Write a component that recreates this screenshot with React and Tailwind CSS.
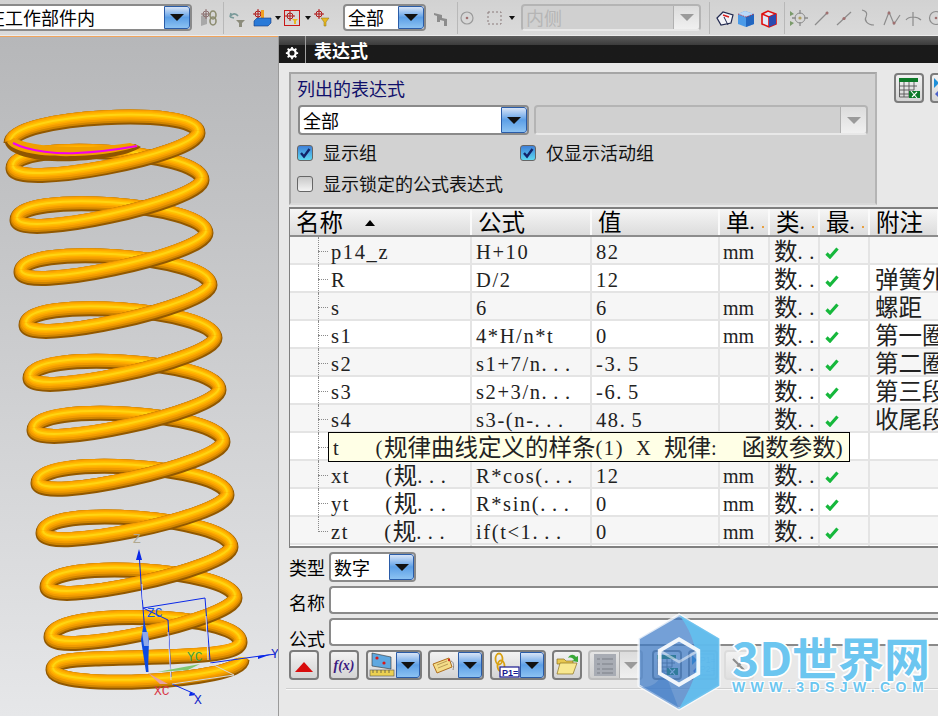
import React from 'react';

const CJK = "[font-family:'Noto_Sans_CJK_SC',sans-serif]";
const LATIN = "[font-family:'Liberation_Serif',serif] text-[20.5px] whitespace-pre";

// splits text so latin is spaced out to half width and chinese gets the full width font
const Mixed = ({ text }) =>
  text.split(/([\u3000-\u9fff\uff00-\uffef]+|\.+| +)/).filter(Boolean).map((part, i) => {
    if (/[\u3000-\u9fff\uff00-\uffef]/.test(part)) {
      return <span key={i} className="[font-family:'Noto_Sans_CJK_SC',sans-serif] text-[23.5px] leading-none align-[-1px]">{part}</span>;
    }
    if (/^[. ]+$/.test(part)) {
      return <span key={i} className={`${LATIN} tracking-[6.6px]`}>{part}</span>;
    }
    return <span key={i} className={`${LATIN} tracking-[1.6px]`}>{part}</span>;
  });

// spring centre line, read off the picture
const L = [[11, 143], [13, 168], [17, 220], [21, 272], [26, 325], [30, 378], [34, 430], [38, 483], [43, 533], [47, 587], [51, 637], [53, 670]];
const R = [[198, 133], [202, 180], [206, 233], [210, 285], [215, 338], [219, 390], [223, 442], [227, 495], [231, 547], [235, 598], [240, 642], [242, 660]];

const back = (i, h = 29) => `M${L[i][0]} ${L[i][1]}C${L[i][0]} ${L[i][1] - h} ${R[i][0]} ${R[i][1] - h} ${R[i][0]} ${R[i][1]}`;
const front = (i, h = 22) => `M${R[i][0]} ${R[i][1]}C${R[i][0]} ${R[i][1] + h} ${L[i + 1][0]} ${L[i + 1][1] + h} ${L[i + 1][0]} ${L[i + 1][1]}`;

const Tube = ({ d }) => (
  <g fill="none">
    <path d={d} stroke="#915800" strokeWidth="15" />
    <path d={d} stroke="#cf8400" strokeWidth="13" transform="translate(0 -1)" />
    <path d={d} stroke="#f09a00" strokeWidth="11" transform="translate(0 -2)" />
    <path d={d} stroke="#ffaa00" strokeWidth="8" transform="translate(0 -2.5)" />
    <path d={d} stroke="#ffbe00" strokeWidth="5" transform="translate(0 -2.5)" />
    <path d={d} stroke="#ffd412" strokeWidth="2" transform="translate(0 -2.5)" />
  </g>
);

const Spring = () => {
  const backs = [];
  for (let i = 1; i <= 10; i++) backs.push(back(i));
  const fronts = [];
  for (let i = 1; i <= 9; i++) fronts.push(front(i));
  return (
    <svg viewBox="0 37 278 679" className="block w-[278px] h-[679px]">
      {backs.map((d, i) => <Tube key={i} d={d} />)}
      <Tube d={back(0, 27)} />
      <path d="M5 143C8 156 40 163 75 161C105 159 130 155 141 147L135 144C100 150 40 152 13 140Z" fill="#8f5500" />
      <path d="M7 142C12 152 40 157 75 156C105 155 125 151 139 146L130 143C100 148 40 150 14 138Z" fill="#f0a000" />
      <path d="M13 143C30 152 60 154 77 153C100 152 120 149 137 146" fill="none" stroke="#f000f0" strokeWidth="2" />
      <Tube d={front(0, 23)} />
      {fronts.map((d, i) => <Tube key={i} d={d} />)}
      <Tube d="M240 642C240 660 150 656 95 659C68 660 53 662 53 670" />
      <Tube d={`M${L[11][0]} ${L[11][1]}C${L[11][0]} ${L[11][1] + 22} ${R[11][0]} ${R[11][1] + 22} ${R[11][0]} ${R[11][1]}`} />

      {/* triad */}
      <g fill="none" strokeWidth="1">
        <path d="M139 552L142 597L143 608L148 672" stroke="#0a28e8" />
        <path d="M143 608L205 598L210 660" stroke="#0a28e8" />
        <path d="M143 608L168 620L171 677" stroke="#0a28e8" />
        <path d="M210 663L253 657L276 654" stroke="#0a28e8" />
        <path d="M172 684L195 694" stroke="#0a28e8" />
        <path d="M210 663L234 675L172 684" stroke="#d8d8d8" />
        <path d="M206 616L208 660M168 632L171 680M142 584L143 600" stroke="#dde" />
      </g>
      <path d="M139 549L136 560L142 560Z" fill="#0a28e8" />
      <path d="M258 656L272 654L258 659Z" fill="#0a28e8" />
      <path d="M190 692L196 695L189 696Z" fill="#0a28e8" />
      <path d="M144 621L141 640L146 672L148 672L149 640Z" fill="#0c4ae0" />
      <path d="M142 632L148 632L149 646L144 646Z" fill="#8ea8e8" />
      <path d="M157 672L200 664L188 670Z" fill="#7fc86f" />
      <path d="M148 673L168 684L160 684Z" fill="#e8a0a0" />
      <g fontFamily="'Liberation Mono',monospace" fontSize="13">
        <text x="133" y="543" fill="#b0a890">Z</text>
        <text x="147" y="617" fill="#1a55e8">ZC</text>
        <text x="187" y="661" fill="#3aa04a">YC</text>
        <text x="154" y="695" fill="#d83848">XC</text>
        <text x="194" y="704" fill="#1428c8">X</text>
        <text x="271" y="658" fill="#1428c8">Y</text>
      </g>
    </svg>
  );
};

const ArrowBtn = ({ disabled, className = '' }) => (
  <div
    className={`flex items-center justify-center shrink-0 ${
      disabled
        ? 'bg-gradient-to-b from-[#dcdcdc] to-[#f0f0f0] border-l border-[#b0b0b0]'
        : 'bg-gradient-to-b from-[#d8e4f6] via-[#5c9fe6] to-[#8cc2f2] border border-[#2a5ca8] rounded-r-[3px]'
    } ${className}`}
  >
    <div className={`w-0 h-0 border-l-[7px] border-r-[7px] border-t-[7px] border-l-transparent border-r-transparent ${disabled ? 'border-t-[#9a9a9a]' : 'border-t-[#111]'}`} />
  </div>
);

const Combo = ({ text, className = '', disabled, arrow = 'w-[26px]' }) => (
  <div
    className={`flex h-full shrink-0 overflow-hidden rounded-[4px] border-2 ${
      disabled ? 'border-[#b4b4b4] bg-[#d0d0d0] border-b-[#e8e8e8]' : 'border-[#8a8a8a] bg-white'
    } ${className}`}
  >
    <div className={`flex-1 min-w-0 flex items-center pl-[3px] text-[18px] ${disabled ? 'text-[#b5b5b5]' : 'text-black'}`}>{text}</div>
    <ArrowBtn disabled={disabled} className={arrow} />
  </div>
);

const Check = ({ checked }) => (
  <div
    className={`w-[16px] h-[16px] shrink-0 rounded-[3px] border border-[#666] flex items-center justify-center ${
      checked ? 'bg-gradient-to-b from-[#3f7fd8] to-[#5fd8f0]' : 'bg-gradient-to-b from-[#c8c8c8] to-[#f4f4f4]'
    }`}
  >
    {checked && (
      <svg viewBox="0 0 12 12" className="w-[12px] h-[12px]">
        <path d="M2 6L5 9.5L10.5 2" fill="none" stroke="#12246a" strokeWidth="2.4" />
      </svg>
    )}
  </div>
);

const GreenCheck = () => (
  <svg viewBox="0 0 14 12" className="w-[14px] h-[12px] block">
    <path d="M1.5 6.5L5 10L12.5 1.5" fill="none" stroke="#16b83c" strokeWidth="3.2" />
  </svg>
);

const Caret = ({ className = '' }) => (
  <div className={`w-0 h-0 shrink-0 border-l-[3.5px] border-r-[3.5px] border-t-[4px] border-l-transparent border-r-transparent border-t-[#111] ${className}`} />
);

const Divider = ({ className = '' }) => <div className={`w-px h-[32px] shrink-0 bg-[#f2f2f2] border-l border-[#b8b8b8] ${className}`} />;

const Ico = ({ children, className = '' }) => (
  <svg viewBox="0 0 20 20" className={`w-[20px] h-[20px] shrink-0 ${className}`}>{children}</svg>
);

const Target = ({ x = 7, y = 7, c = '#b01818' }) => (
  <g fill="none" stroke={c} strokeWidth="1">
    <circle cx={x} cy={y} r="3" />
    <path d={`M${x - 5} ${y}H${x + 5}M${x} ${y - 5}V${y + 5}`} />
  </g>
);

const Funnel = ({ x = 11, y = 11, c = '#e8b820' }) => <path d={`M${x} ${y}h8l-3 4v4h-2v-4z`} fill={c} stroke="#8a7010" strokeWidth=".5" />;

const GreyLine = ({ d }) => <path d={d} fill="none" stroke="#8c8c8c" strokeWidth="1.2" />;

const TableIcon = () => (
  <svg viewBox="0 0 24 24" className="w-[24px] h-[24px]">
    <rect x="2" y="2" width="19" height="4" fill="#0d7a28" />
    <path d="M2.5 6v15h15M7 6v15M12 6v15M17 6v8M2 10h18M2 14h15M2 18h10" fill="none" stroke="#555" strokeWidth=".9" />
    <path d="M12 15h11v7H12z" fill="#0d7a28" />
    <path d="M14 15l6 7M20 16l-5 5" stroke="#fff" strokeWidth="1.1" />
  </svg>
);

const P1Icon = () => (
  <svg viewBox="0 0 24 24" className="w-[24px] h-[24px]">
    <path d="M1 2l5 5-5 5z" fill="#1e8fd8" />
    <path d="M7 13l-5 5 5 5z" fill="#4a60c8" />
    <rect x="8" y="1" width="15" height="21" fill="#e8eef8" stroke="#2a3aa0" />
    <text x="9" y="10" fontSize="8.5" fontFamily="'Liberation Sans',sans-serif" fill="#1a2a90">P1=</text>
    <text x="9" y="19" fontSize="8.5" fontFamily="'Liberation Sans',sans-serif" fill="#1a2a90">P2=</text>
  </svg>
);

const Btn = ({ children, className = '' }) => (
  <div className={`h-[30px] w-[30px] shrink-0 flex items-center justify-center rounded-[4px] border-2 border-[#7c7c7c] bg-gradient-to-b from-[#f2f2f2] to-[#d4d4d4] ${className}`}>
    {children}
  </div>
);

const SplitBtn = ({ children, className = '' }) => (
  <div className={`h-[30px] w-[56px] shrink-0 flex overflow-hidden rounded-[4px] border-2 border-[#7c7c7c] bg-gradient-to-b from-[#f2f2f2] to-[#d4d4d4] ${className}`}>
    <div className="flex-1 flex items-center justify-center">{children}</div>
    <ArrowBtn className="w-[24px]" />
  </div>
);

const rows = [
  ['p14_z', 'H+10', '82', 'mm', ''],
  ['R', 'D/2', '12', '', '弹簧外'],
  ['s', '6', '6', 'mm', '螺距'],
  ['s1', '4*H/n*t', '0', 'mm', '第一圈'],
  ['s2', 's1+7/n...', '-3.5', '', '第二圈'],
  ['s3', 's2+3/n...', '-6.5', '', '第三段'],
  ['s4', 's3-(n-...', '48.5', '', '收尾段'],
  ['', '', '', '', ''],
  ['xt   (规...', 'R*cos(...', '12', 'mm', ''],
  ['yt   (规...', 'R*sin(...', '0', 'mm', ''],
  ['zt   (规...', 'if(t<1...', '0', 'mm', ''],
];

const headers = ['名称', '公式', '值', '单.', '类.', '最.', '附注'];

const GRID = 'grid grid-cols-[182px_120px_128px_50px_50px_50px_69px]';

const App = () => {
  return (
    <div className={`w-[938px] h-[716px] overflow-hidden relative flex flex-col bg-[#e8e8e8] ${CJK}`}>
      {/* top toolbar */}
      <div className="h-[36px] shrink-0 flex items-center bg-gradient-to-b from-[#d2d2d2] to-[#dadada] border-b border-[#ececec] overflow-hidden">
        <div className="h-[27px] w-[192px] shrink-0 flex overflow-hidden rounded-r-[4px] border-2 border-l-0 border-[#8a8a8a] bg-white">
          <div className="flex-1 min-w-0 overflow-hidden flex items-center text-[18px] whitespace-nowrap text-black">
            <span className="-ml-[13px]">在工作部件内</span>
          </div>
          <ArrowBtn className="w-[26px]" />
        </div>
        <Ico className="ml-[6px]">
          <path d="M3 8l6-3v11l-6 2z" fill="#a8a8a8" />
          <Target x={8} y={6} c="#8c7070" />
          <ellipse cx="15" cy="7" rx="3" ry="4" fill="none" stroke="#8c8c70" strokeWidth="1.6" />
          <ellipse cx="15" cy="13" rx="3" ry="4" fill="none" stroke="#8c8c70" strokeWidth="1.6" />
        </Ico>
        <Divider className="ml-[5px]" />
        <Ico className="ml-[3px]">
          <path d="M3 9C5 5 9 5 11 8M3 9l4 1M3 9l1-4" fill="none" stroke="#7a9a9a" strokeWidth="1.6" />
          <path d="M9 12h9l-3 3v4h-3v-4z" fill="#8c8c7c" />
        </Ico>
        <Ico className="ml-[5px]">
          <Target x={6} y={6} />
          <rect x="9" y="2" width="3" height="8" fill="#f0a020" />
          <path d="M2 13l3-3h14v5l-3 3H2z" fill="#2a7ad8" stroke="#143a80" strokeWidth=".6" />
        </Ico>
        <Caret className="ml-[3px]" />
        <div className="ml-[3px] w-[16px] h-[16px] shrink-0 border border-[#c81818] flex items-center justify-center">
          <svg viewBox="0 0 14 14" className="w-[14px] h-[14px]">
            <Target x={5} y={5} />
            <path d="M7 8h6l-2 2v3h-2v-3z" fill="#e8b820" />
          </svg>
        </div>
        <Caret className="ml-[5px]" />
        <Ico className="ml-[1px]">
          <Target x={7} y={6} />
          <Funnel x={9} y={10} />
        </Ico>
        <Combo text="全部" className="!h-[27px] w-[83px] ml-[11px]" />
        <Ico className="ml-[5px]">
          <path d="M3 5l8 2v3l5 1v7h-3v-5l-4-1v2H6V8L3 7z" fill="#8c8c8c" />
        </Ico>
        <Divider className="ml-[6px]" />
        <Ico className="ml-[0px]">
          <circle cx="9" cy="10" r="6" fill="none" stroke="#9a9a9a" strokeWidth="1.2" />
          <circle cx="9" cy="10" r="1.3" fill="#a07070" />
        </Ico>
        <Ico className="ml-[7px]">
          <rect x="3" y="4" width="13" height="12" fill="none" stroke="#8a7a7a" strokeWidth="1" strokeDasharray="2 2" />
        </Ico>
        <Caret className="ml-[4px]" />
        <Combo text="内侧" disabled className="!h-[27px] w-[180px] ml-[6px]" />
        <Divider className="ml-[8px]" />
        <Ico className="ml-[5px]">
          <path d="M2 10l6-6 10 3-2 8-10 2z" fill="#f4f4f8" stroke="#222a50" strokeWidth="1.2" />
          <path d="M8 7l6 2" stroke="#d82020" strokeWidth="1.4" />
          <path d="M9 9l4 8" stroke="#222a50" />
        </Ico>
        <Ico className="ml-[1px]">
          <path d="M2 6l7-3 9 3v10l-8 3-8-3z" fill="#4a9ae8" />
          <path d="M2 6l8 3 8-3-9-3z" fill="#b8d8f8" />
          <path d="M10 9v10l8-3V6z" fill="#2266c0" />
          <path d="M2 6l8 3 8-3" fill="none" stroke="#e02020" strokeWidth=".7" strokeDasharray="1.5 1" />
        </Ico>
        <Ico className="ml-[3px]">
          <path d="M3 6l6-3 8 3v10l-7 3-7-3z" fill="#dfe8f8" stroke="#e01010" strokeWidth="1.6" />
          <path d="M3 6l7 3 7-3M10 9v10" fill="none" stroke="#e01010" strokeWidth="1.6" />
          <path d="M10 9v10l7-3V6z" fill="#2a4ab0" />
        </Ico>
        <Divider className="ml-[5px]" />
        <Ico className="ml-[4px]">
          <circle cx="11" cy="10" r="5" fill="none" stroke="#8c8c8c" />
          <circle cx="11" cy="10" r="1.6" fill="#b0a060" />
          <path d="M11 2v4M11 14v4M3 10h4M15 10h4" stroke="#8c8c8c" strokeWidth="1.3" />
          <path d="M1 3l4 3-4 2zM1 13l4 2-4 3z" fill="#7a9a6a" />
        </Ico>
        <Ico className="ml-[3px]">
          <GreyLine d="M3 17L16 4" />
          <circle cx="15" cy="5" r="1.5" fill="#a07070" />
        </Ico>
        <Ico className="ml-[2px]">
          <GreyLine d="M3 17L17 4" />
          <circle cx="10" cy="10.5" r="1.6" fill="#a07070" />
        </Ico>
        <Ico className="ml-[3px]">
          <GreyLine d="M5 2C9 3 11 5 9 9C7 12 10 17 17 17" />
        </Ico>
        <Ico className="ml-[5px]">
          <GreyLine d="M2 17L7 4L12 16L18 7" />
          <circle cx="7" cy="5" r="1.5" fill="#a07070" />
          <circle cx="12" cy="15" r="1.5" fill="#a07070" />
        </Ico>
        <Ico className="ml-[1px]">
          <GreyLine d="M10 4V18M3 12C6 8 14 8 18 12" />
        </Ico>
        <Ico className="ml-[2px]">
          <circle cx="11" cy="10" r="6.5" fill="none" stroke="#8c8c8c" strokeWidth="1.2" />
          <circle cx="11" cy="10" r="1.3" fill="#a07070" />
        </Ico>
      </div>

      <div className="flex flex-1 min-h-0">
        {/* graphics window */}
        <div className="w-[278px] shrink-0 border-t border-[#f0a45c] bg-gradient-to-b from-[#b6b7b9] to-[#e6e7e9] overflow-hidden">
          <Spring />
        </div>

        {/* expressions dialog */}
        <div className="flex-1 min-w-0 flex flex-col border-l border-[#9a9a9a] bg-[#e8e8e8] overflow-hidden">
          <div className="h-[27px] shrink-0 flex items-stretch bg-gradient-to-b from-[#5c5c5c] via-[#3a3a3a] via-35% to-[#1a1a1a] to-35%">
            <div className="w-[27px] flex items-center justify-center border-r border-[#a0a0a0]">
              <svg viewBox="0 0 16 16" className="w-[14px] h-[14px] mt-[6px]">
                <circle cx="8" cy="8" r="4.2" fill="none" stroke="#fff" strokeWidth="2.6" />
                <path d="M8 1v3M8 12v3M1 8h3M12 8h3M3 3l2 2M11 11l2 2M13 3l-2 2M5 11l-2 2" stroke="#fff" strokeWidth="2" />
              </svg>
            </div>
            <div className="pl-[8px] pt-[1px] text-white font-bold text-[18px] leading-[27px]">表达式</div>
          </div>

          <div className="flex mt-[9px] ml-[10px] shrink-0">
            <div className="w-[588px] h-[133px] shrink-0 bg-[#d2d2d2] border-2 border-[#a6a6a6] border-b-[#d8d8d8] border-r-[#b4b4b4] pl-[6px]">
              <div className="mt-[3px] h-[22px] leading-[22px] text-[18px] text-[#10106a]">列出的表达式</div>
              <div className="mt-[6px] h-[30px] flex gap-[5px] ml-[1px]">
                <Combo text="全部" className="w-[231px]" />
                <Combo text="" disabled className="w-[334px]" />
              </div>
              <div className="mt-[2px] h-[31px] flex items-center text-[18px] text-[#111]">
                <div className="w-[223px] flex items-center gap-[10px]">
                  <Check checked />
                  <span>显示组</span>
                </div>
                <div className="flex items-center gap-[10px]">
                  <Check checked />
                  <span>仅显示活动组</span>
                </div>
              </div>
              <div className="h-[31px] flex items-center gap-[10px] text-[18px] text-[#111]">
                <Check />
                <span>显示锁定的公式表达式</span>
              </div>
            </div>
            <Btn className="ml-[17px] mt-[1px]"><TableIcon /></Btn>
            <Btn className="ml-[6px] mt-[1px]"><P1Icon /></Btn>
          </div>

          {/* table */}
          <div className="relative mt-[2px] ml-[10px] h-[341px] shrink-0 overflow-hidden bg-white border-t-2 border-l border-b-2 border-[#7f7f7f]">
            <div className={`${GRID} h-[28px] bg-gradient-to-b from-[#f6f6f6] to-[#dcdcdc] border-b-2 border-[#8c8c8c]`}>
              {headers.map((h, i) => (
                <div key={h} className="relative flex items-center pl-[6px] border-r-2 border-[#fafafa] whitespace-nowrap overflow-hidden text-black">
                  <Mixed text={h} />
                  {i === 0 && <div className="absolute left-[75px] top-[11px] w-0 h-0 border-l-[5px] border-r-[5px] border-b-[6px] border-l-transparent border-r-transparent border-b-black" />}
                  {i >= 3 && i <= 5 && <span className="absolute right-[4px] bottom-[7px] w-[2px] h-[2px] bg-[#e8a040]" />}
                </div>
              ))}
            </div>
            {rows.map((r, i) => (
              <div key={i} className={`${GRID} h-[28px] border-b-2 border-[#e4e4e4] text-[#222] ${i % 2 === 0 ? 'bg-[#f6f6f6]' : 'bg-white'}`}>
                <div className="relative pl-[41px] leading-[31px] whitespace-nowrap border-r-2 border-[#e4e4e4]">
                  <span className={`absolute left-[28px] top-0 border-l border-dotted border-[#8a8a8a] ${i === rows.length - 1 ? 'h-[15px]' : 'h-[28px]'}`} />
                  <span className="absolute left-[28px] top-[14px] w-[10px] border-t border-dotted border-[#8a8a8a]" />
                  <Mixed text={r[0]} />
                </div>
                <div className="pl-[4px] leading-[31px] whitespace-nowrap border-r-2 border-[#e4e4e4]"><Mixed text={r[1]} /></div>
                <div className="pl-[4px] leading-[31px] whitespace-nowrap border-r-2 border-[#e4e4e4]"><Mixed text={r[2]} /></div>
                <div className="pl-[3px] leading-[31px] whitespace-nowrap border-r-2 border-[#e4e4e4]">
                  {r[3] && <span className="[font-family:'Liberation_Serif',serif] text-[20px]">{r[3]}</span>}
                </div>
                <div className="pl-[4px] leading-[31px] whitespace-nowrap overflow-hidden border-r-2 border-[#e4e4e4]">
                  {r[2] && <Mixed text="数.." />}
                </div>
                <div className="pl-[5px] flex items-center border-r-2 border-[#e4e4e4]">{r[2] && <GreenCheck />}</div>
                <div className="pl-[5px] leading-[31px] whitespace-nowrap overflow-hidden"><Mixed text={r[4]} /></div>
              </div>
            ))}
            {/* tooltip over row t */}
            <div className="absolute left-[38px] top-[223px] w-[522px] h-[30px] bg-[#ffffe6] border border-black pl-[4px] leading-[30px] whitespace-nowrap text-[#222]">
              <Mixed text="t   (规律曲线定义的样条(1) X 规律:  函数参数)" />
            </div>
          </div>

          {/* form */}
          <div className="mt-[4px] ml-[10px] h-[30px] shrink-0 flex items-center">
            <span className="w-[40px] text-[18px] text-black">类型</span>
            <Combo text="数字" className="w-[87px]" arrow="w-[25px]" />
          </div>
          <div className="mt-[4px] ml-[10px] h-[28px] shrink-0 flex items-end">
            <span className="w-[40px] text-[18px] leading-[24px] text-black">名称</span>
            <div className="flex-1 h-[28px] bg-white border-2 border-r-0 border-[#8a8a8a] rounded-l-[4px]" />
          </div>
          <div className="mt-[4px] ml-[10px] h-[28px] shrink-0 flex items-end">
            <span className="w-[40px] text-[18px] leading-[16px] text-black">公式</span>
            <div className="flex-1 h-[28px] bg-white border-2 border-r-0 border-[#8a8a8a] rounded-l-[4px]" />
          </div>

          {/* buttons */}
          <div className="mt-[4px] ml-[10px] h-[30px] shrink-0 flex">
            <Btn>
              <svg viewBox="0 0 18 10" className="w-[18px] h-[10px] mt-[3px]"><path d="M9 0L18 10H0Z" fill="#d80c0c" /></svg>
            </Btn>
            <Btn className="ml-[10px]">
              <span className="[font-family:'Liberation_Serif',serif] italic font-bold text-[14px] text-[#3a1a80]">f(x)</span>
            </Btn>
            <SplitBtn className="ml-[7px]">
              <svg viewBox="0 0 26 26" className="w-[26px] h-[26px]">
                <path d="M3 1l19 4v12L3 14z" fill="#5fa8e0" stroke="#333" strokeWidth=".6" />
                <circle cx="8" cy="6" r="1.6" fill="#d81818" />
                <circle cx="15" cy="11" r="1.6" fill="#d81818" />
                <rect x="1" y="18" width="24" height="6" fill="#ecd050" stroke="#555" strokeWidth=".6" />
                <path d="M4 18v3M8 18v3M12 18v3M16 18v3M20 18v3" stroke="#444" strokeWidth=".7" />
              </svg>
            </SplitBtn>
            <SplitBtn className="ml-[6px]">
              <svg viewBox="0 0 26 26" className="w-[26px] h-[26px]">
                <path d="M2 12L18 6L21 15L6 21Z" fill="#f4dc88" stroke="#b07020" />
                <path d="M6 13l10-4M7 16l10-4" stroke="#a08040" strokeWidth=".7" />
                <path d="M20 9c3 1 3 5 2 9" fill="none" stroke="#888" />
                <circle cx="18" cy="8" r="1.2" fill="#d02020" />
              </svg>
            </SplitBtn>
            <SplitBtn className="ml-[6px]">
              <svg viewBox="0 0 28 26" className="w-[28px] h-[26px]">
                <ellipse cx="7" cy="7" rx="3.5" ry="5.5" fill="none" stroke="#d8a010" strokeWidth="1.8" />
                <ellipse cx="9" cy="14" rx="3.5" ry="5.5" fill="none" stroke="#d8a010" strokeWidth="1.8" />
                <rect x="8" y="15" width="19" height="10" fill="#fff" stroke="#1a1a90" strokeWidth="1.2" />
                <text x="10" y="23.5" fontSize="9" fontWeight="bold" fontFamily="'Liberation Sans',sans-serif" fill="#1a1a90">P1=</text>
              </svg>
            </SplitBtn>
            <Btn className="ml-[6px]">
              <svg viewBox="0 0 24 24" className="w-[24px] h-[24px]">
                <path d="M2 6h7l2 2h7v3H2z" fill="#e8c850" stroke="#8a7020" strokeWidth=".7" />
                <path d="M2 21L5 10h17l-4 11z" fill="#f8e890" stroke="#8a7020" strokeWidth=".7" />
                <path d="M13 5C15 1 19 1 21 4l2-1v6l-6-1 2-1C18 5 16 4 13 5Z" fill="#38a838" />
              </svg>
            </Btn>
            <div className="ml-[6px] h-[30px] w-[55px] shrink-0 flex overflow-hidden rounded-[4px] border-2 border-[#bdbdbd] bg-gradient-to-b from-[#e4e4e4] to-[#cfcfcf]">
              <div className="flex-1 flex items-center justify-center">
                <svg viewBox="0 0 24 24" className="w-[24px] h-[24px]">
                  <rect x="1" y="1" width="22" height="22" fill="#a8acb4" />
                  <path d="M4 6h3M9 6h11M4 11h3M9 11h11M4 16h3M9 16h11M4 20h3M9 20h11" stroke="#8a8e96" strokeWidth="1.4" />
                </svg>
              </div>
              <ArrowBtn disabled className="w-[22px]" />
            </div>
            <Btn className="ml-[9px]"><TableIcon /></Btn>
            <Btn className="ml-[6px]"><P1Icon /></Btn>
            <Btn className="ml-[6px] border-[#dcdcdc] from-[#ececec] to-[#e0e0e0]">
              <svg viewBox="0 0 20 20" className="w-[20px] h-[20px]">
                <path d="M4 4L16 16M16 4L4 16" stroke="#8c8c8c" strokeWidth="2" />
              </svg>
            </Btn>
          </div>
          <div className="mt-[8px] ml-[7px] h-[2px] shrink-0 bg-[#cfcfcf] border-b border-[#f8f8f8]" />
        </div>
      </div>

      {/* watermark on top of everything */}
      <svg viewBox="0 0 100 112" preserveAspectRatio="none" className="absolute left-[637px] top-[613px] w-[84px] h-[98px]">
        <path d="M50 2L98 29V83L50 110L2 83V29Z" fill="#3f7cc8" fillOpacity="0.72" stroke="#fff" strokeOpacity="0.75" strokeWidth="3" />
        <path d="M50 2L98 29V83L50 110C60 90 75 70 70 45C66 25 58 12 50 2Z" fill="#63c0ee" fillOpacity="0.9" />
        <path d="M2 83C20 90 35 70 30 60L50 110L2 83Z" fill="#3f7cc8" fillOpacity="0.5" />
        <path d="M50 30L73 43V69L50 82L27 69V43Z" fill="none" stroke="#fff" strokeWidth="4.5" strokeOpacity="0.9" />
        <path d="M27 43L50 56L73 43" fill="none" stroke="#fff" strokeWidth="3" strokeOpacity="0.5" />
      </svg>
      <div className="absolute left-[732px] top-[628px] flex flex-col items-start">
        <div className="[font-family:'Noto_Sans_CJK_SC',sans-serif] font-bold text-[46px] leading-[56px] whitespace-nowrap text-[#6cc6f0] [text-shadow:1px_1px_0_#fff,-1px_-1px_0_#fff,1px_-1px_0_#fff,-1px_1px_0_#fff,2px_0_0_#fff,-2px_0_0_#fff,0_2px_0_#fff,0_-2px_0_#fff]">
          3D世界网
        </div>
        <div className="-mt-[4px] [font-family:'Liberation_Sans',sans-serif] font-bold text-[14px] leading-[14px] tracking-[5.4px] whitespace-nowrap text-[#6cc6f0] [text-shadow:1px_1px_0_#fff,-1px_-1px_0_#fff,1px_-1px_0_#fff,-1px_1px_0_#fff]">
          WWW.3DSJW.COM
        </div>
      </div>
    </div>
  );
};

export default App;
